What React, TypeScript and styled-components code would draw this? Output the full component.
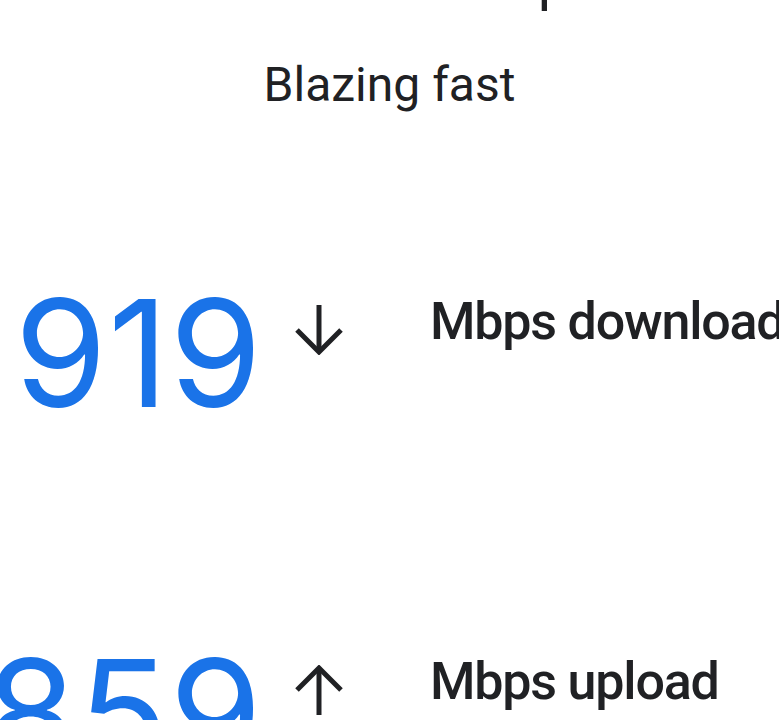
import React from 'react';
import styled, { createGlobalStyle } from 'styled-components';

const GlobalStyle = createGlobalStyle`
  html, body {
    margin: 0;
    padding: 0;
    background: #ffffff;
  }
  body {
    font-family: Roboto, "Noto Sans", Arial, sans-serif;
    color: #202124;
  }
`;

const Page = styled.div`
  width: 779px;
  height: 720px;
  overflow: hidden;
  display: flex;
  flex-direction: column;
  background: #ffffff;
`;

// only the descenders of the title stay inside the picture
const Heading = styled.h1`
  margin: -50px 0 0;
  padding-left: 78px;
  font-size: 58px;
  line-height: 1;
  font-weight: 400;
  text-align: center;
  white-space: nowrap;
  color: #202124;
`;

const Subtitle = styled.div`
  margin-top: 53px;
  font-size: 48px;
  line-height: 1;
  text-align: center;
  color: #202124;
`;

const StatList = styled.div`
  display: flex;
  flex-direction: column;
  gap: 211px;
  margin-top: 170px;
`;

const StatRow = styled.div`
  display: grid;
  grid-template-columns: 262px 168px 1fr;
  align-items: start;
`;

// flex-end so a wide number grows to the left, not into the arrow
const Value = styled.div`
  display: flex;
  justify-content: flex-end;
  font-family: Inter, Roboto, sans-serif;
  font-size: 149px;
  line-height: 1;
  white-space: nowrap;
  color: #1a73e8;
  letter-spacing: 1px;
  margin-right: -1px;
`;

const ArrowBox = styled.div`
  padding: 26px 0 0 33px;
  svg {
    display: block;
  }
`;

const Label = styled.div`
  font-size: 52px;
  font-weight: 500;
  line-height: 1;
  letter-spacing: -1.2px;
  white-space: nowrap;
  padding-top: 17px;
  color: #202124;
`;

type Direction = 'down' | 'up';

const Arrow: React.FC<{ direction: Direction }> = ({ direction }) => (
  <svg
    width="48"
    height="50"
    viewBox="0 0 48 50"
    fill="none"
    stroke="#202124"
    strokeWidth="5"
    style={direction === 'up' ? { transform: 'rotate(180deg)' } : undefined}
  >
    <path d="M24 0V46" />
    <path d="M2 25L24 47L46 25" />
  </svg>
);

interface StatProps {
  value: string;
  direction: Direction;
  label: string;
}

const Stat: React.FC<StatProps> = ({ value, direction, label }) => (
  <StatRow>
    <Value>
      <span>{value}</span>
    </Value>
    <ArrowBox>
      <Arrow direction={direction} />
    </ArrowBox>
    <Label>{label}</Label>
  </StatRow>
);

const App: React.FC = () => {
  return (
    <Page>
      <GlobalStyle />
      <Heading>Your Internet speeds</Heading>
      <Subtitle>Blazing fast</Subtitle>
      <StatList>
        <Stat value="919" direction="down" label="Mbps download" />
        <Stat value="859" direction="up" label="Mbps upload" />
      </StatList>
    </Page>
  );
};

export default App;
